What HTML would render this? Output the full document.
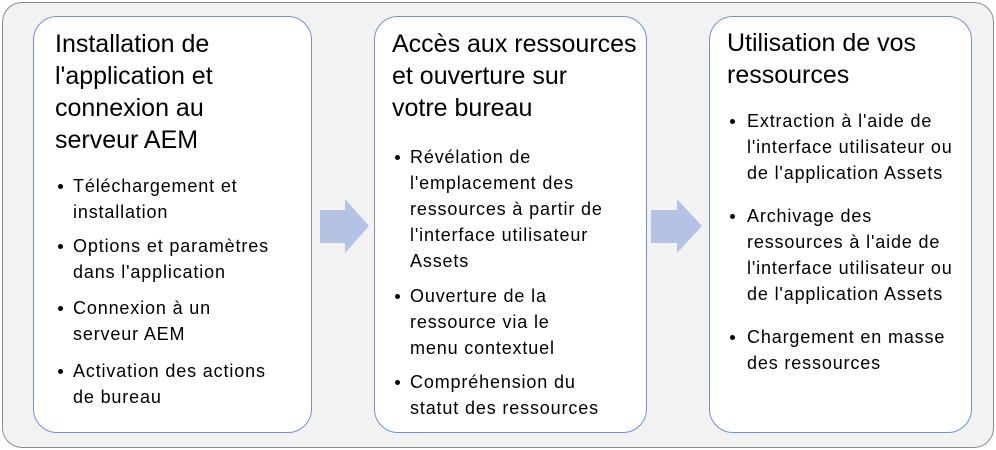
<!DOCTYPE html>
<html><head><meta charset="utf-8"><style>
body{margin:0;width:996px;height:450px;background:#fff;position:relative;overflow:hidden;font-family:"Liberation Sans",sans-serif;color:#000}
.outer{position:absolute;left:2px;top:2px;width:990px;height:444px;background:#f2f2f2;border:1px solid #8c8c8c;border-radius:20px}
.box{position:absolute;top:16px;height:415px;background:#fff;border:1.5px solid #6f93d0;border-radius:24px}
.t{position:absolute;font-size:25px;white-space:nowrap;line-height:32px}
.b{position:absolute;font-size:18px;letter-spacing:0.85px;white-space:nowrap;line-height:26px}
.d{position:absolute;width:5px;height:5px;border-radius:50%;background:#000}
</style></head><body>
<div class="outer"></div>
<div class="box" style="left:33px;width:277px"></div>
<div class="box" style="left:374px;width:271px"></div>
<div class="box" style="left:709px;width:261px"></div>
<svg style="position:absolute;left:0;top:0" width="996" height="450">
<polygon points="320,210 345,210 345,199 369,226 345,253 345,243 320,243" fill="#b4c2e3"/>
<polygon points="651,210 677,210 677,199 702,226 677,253 677,243 651,243" fill="#b4c2e3"/>
</svg>
<div class="t" style="left:55px;top:28px">Installation de<br>l'application et<br>connexion au<br>serveur AEM</div>
<div class="d" style="left:58px;top:184px"></div>
<div class="b" style="left:73px;top:173px">Téléchargement et<br>installation</div>
<div class="d" style="left:58px;top:244px"></div>
<div class="b" style="left:73px;top:233px">Options et paramètres<br>dans l'application</div>
<div class="d" style="left:58px;top:306px"></div>
<div class="b" style="left:73px;top:295px">Connexion à un<br>serveur AEM</div>
<div class="d" style="left:58px;top:369px"></div>
<div class="b" style="left:73px;top:358px">Activation des actions<br>de bureau</div>

<div class="t" style="left:392px;top:28px">Accès aux ressources<br>et ouverture sur<br>votre bureau</div>
<div class="d" style="left:395px;top:155px"></div>
<div class="b" style="left:410px;top:144px">Révélation de<br>l'emplacement des<br>ressources à partir de<br>l'interface utilisateur<br>Assets</div>
<div class="d" style="left:395px;top:294px"></div>
<div class="b" style="left:410px;top:283px">Ouverture de la<br>ressource via le<br>menu contextuel</div>
<div class="d" style="left:395px;top:380px"></div>
<div class="b" style="left:410px;top:369px">Compréhension du<br>statut des ressources</div>

<div class="t" style="left:727px;top:27px">Utilisation de vos<br>ressources</div>
<div class="d" style="left:730px;top:119px"></div>
<div class="b" style="left:747px;top:108px">Extraction à l'aide de<br>l'interface utilisateur ou<br>de l'application Assets</div>
<div class="d" style="left:730px;top:214px"></div>
<div class="b" style="left:747px;top:203px">Archivage des<br>ressources à l'aide de<br>l'interface utilisateur ou<br>de l'application Assets</div>
<div class="d" style="left:730px;top:335px"></div>
<div class="b" style="left:747px;top:324px">Chargement en masse<br>des ressources</div>
</body></html>
